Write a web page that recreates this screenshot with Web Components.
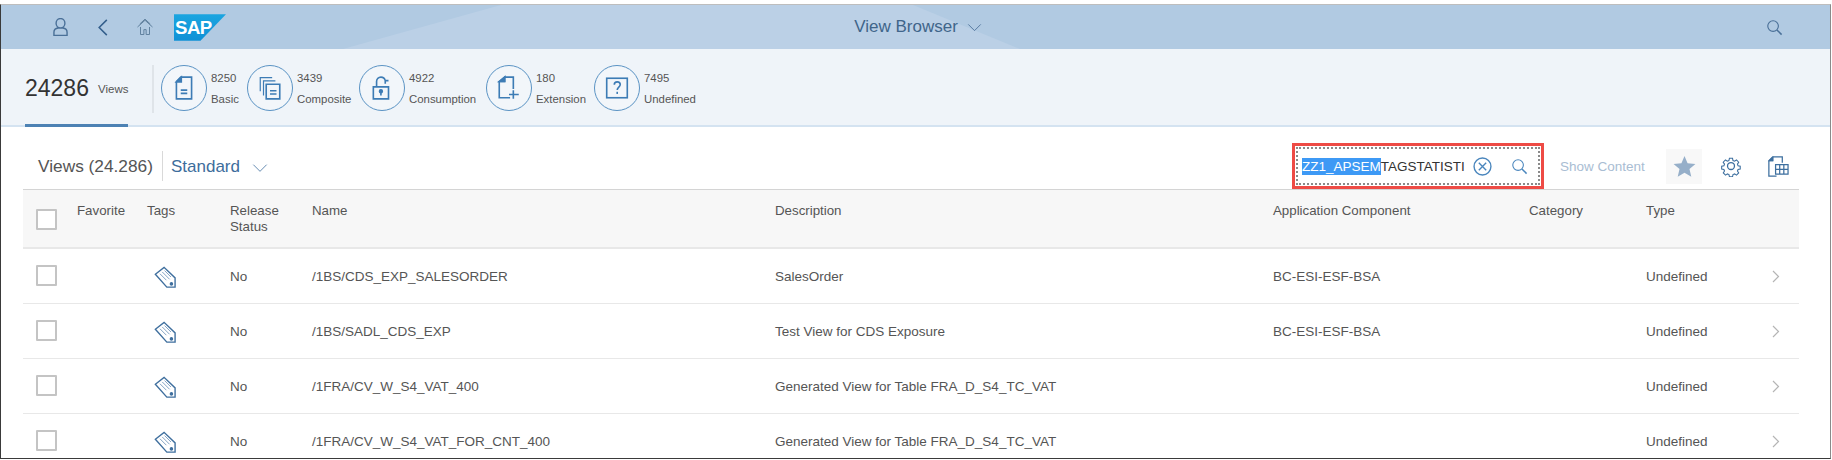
<!DOCTYPE html>
<html><head><meta charset="utf-8"><style>
html,body{margin:0;padding:0;background:#fff;height:460px;overflow:hidden}
body{font-family:"Liberation Sans",Arial,sans-serif;color:#333}
</style></head><body>
<vb-app>
  <vb-shell></vb-shell>
  <vb-kpis></vb-kpis>
  <vb-toolbar></vb-toolbar>
  <vb-table></vb-table>
</vb-app>
<script>
const S={
 user:'<path d="M12 3.500c2.800 0 4.700 2.300 4.700 5s-1.900 5-4.700 5-4.700-2.300-4.700-5 1.900-5 4.700-5zM5 21.500v-3.500c0-2.500 2-4.200 4.500-4.500h5c2.500.3 4.500 2 4.500 4.500v3.500z"/>',
 back:'<path d="M15 3 6 12l9 9"/>',
 home:'<path d="M2 12 12 3l10 9M5 8 12 1.500 19 8M6 12v10h4.500v-6.500h3V22H18V12"/>',
 search:'<circle cx="10" cy="10" r="7.500"/><path d="M15.500 15.500l6.500 6.500" stroke-width="2.200"/>',
 chev:'<path d="M2 7l10 10L22 7"/>',
};
const COLS='54px 70px 83px 82px 463px 498px 256px 117px 1fr 27px';
function svg(p,w,h,c,sw,vb){return `<svg xmlns="http://www.w3.org/2000/svg" width="${w}" height="${h}" viewBox="${vb||'0 0 24 24'}" fill="none" stroke="${c}" stroke-width="${sw}" aria-hidden="true">${p}</svg>`}
function def(n,html){customElements.define(n,class extends HTMLElement{constructor(){super();this.attachShadow({mode:'open'}).innerHTML=typeof html==='function'?html(this):html}})}

def('vb-app',`<style>:host{display:block;box-sizing:border-box;margin-top:4px;height:455px;width:1831px;border-top:1px solid #bdbdbd;border-left:1px solid #3a3a3a;border-right:1px solid #8a8a8a;border-bottom:1px solid #3a3a3a;overflow:hidden;background:#fff}</style><slot></slot>`);

def('vb-shell',`<style>
:host{display:flex;align-items:center;height:44px;background:#b1cae2;position:relative;color:#45688c}
.wedge{position:absolute;inset:0;background:#bbd0e6;clip-path:polygon(342px 44px,500px 0,912px 0,1019px 44px)}
.l,.m,.r{position:relative}
.l{display:flex;align-items:center;padding-left:52px;width:0;flex:1}
.m{display:flex;align-items:center;gap:9px;font-size:17px;color:#40658a;white-space:nowrap}
.r{flex:1;display:flex;justify-content:flex-end;padding-right:47px}
.l svg{flex:none}
.logo{margin-left:20px;flex:none}
</style>
<div class="wedge"></div>
<div class="l">
${svg(S.user,15,18,'#4a7098',1.5,'4 3 16 19')}
<span style="width:30px;flex:none"></span>${svg(S.back,10,17,'#345f8c',1.8,'5 2 11 20')}
<span style="width:28px;flex:none"></span>${svg(S.home,18,18,'#5f7f9d',1.3)}
<svg class="logo" width="52" height="27" viewBox="0 0 53 27" xmlns="http://www.w3.org/2000/svg"><defs><linearGradient id="g" x1="0" x2="0" y1="0" y2="1"><stop offset="0" stop-color="#1ba5e0"/><stop offset="1" stop-color="#0f91d6"/></linearGradient></defs><path d="M0 0H53L27 27H0z" fill="url(#g)"/><text x="1" y="20" font-family="Liberation Sans" font-weight="700" font-size="19" letter-spacing="-.5" fill="#fff">SAP</text></svg>
</div>
<div class="m"><span>View Browser</span>${svg(S.chev,15,15,'#4a7098',1.4)}</div>
<div class="r">${svg(S.search,17,17,'#4a7098',1.6)}</div>`);

const ICONS={
 basic:'<path d="M9 2h10v20H5V6z"/><path d="M5 6.500h4.500V2z" fill="#3d7cb5"/><path d="M9 14h6M9 17h6"/>',
 comp:'<path d="M3 15V2.500h11M6 19V5.500h11" stroke-width="1.100"/><path d="M8.500 8.500H21V22H8.500zM12 14.500h6M12 17.500h6"/>',
 cons:'<path d="M4 11h14v11H4zM7 11V6c0-2.200 1.800-4 4-4 2 0 3.500 1.300 4 3.200h3M15 5v3"/><circle cx="11" cy="15" r="1.300" fill="#3d7cb5"/><path d="M11 16v3"/>',
 ext:'<path d="M8 2h8v11M3 6v15h10M3 6l5-4v4z"/><path d="M3.500 6h4.500v-4z" fill="#3d7cb5"/><path d="M16 14v8M12 18h9"/>',
 undef:'<rect x="2.500" y="3" width="19" height="18"/><path d="M9.500 9c0-1.700 1.200-2.700 2.700-2.700S15 7.400 15 8.800c0 2.400-2.800 2.300-2.800 5"/><path d="M12.200 15.500v2"/>'
};
def('vb-kpi',h=>`<style>
:host{display:inline-flex;flex:none}
.c{box-sizing:border-box;width:46px;height:46px;border:1.300px solid #5a93c4;border-radius:50%;display:flex;align-items:center;justify-content:center;background:#f2f6fa;flex:none}
.t{margin-left:4px;font-size:11.400px;color:#555;display:flex;flex-direction:column;padding-top:3px;line-height:21px;white-space:nowrap}
</style><div class="c">${svg(ICONS[h.getAttribute('icon')],26,26,'#3d7cb5',1.500)}</div>
<div class="t"><span>${h.getAttribute('n')}</span><span>${h.getAttribute('l')}</span></div>`);

def('vb-kpis',`<style>
:host{display:flex;box-sizing:border-box;height:78px;background:#eff4f9;border-bottom:2px solid #d4e3f1;padding-left:24px;position:relative}
.tot{width:103px;height:78px;box-sizing:border-box;border-bottom:3px solid #4d82b4;display:flex;align-items:center;flex:none;padding-top:3px}
.big{font-size:23px;color:#333}.v{font-size:11.500px;color:#555;margin-left:9px;padding-top:1px}
.sep{width:2px;height:48px;background:#dfe4e9;margin:16px 7px 0 24px;flex:none}
.list{display:flex;padding-top:16px;height:46px}
</style>
<div class="tot"><span class="big">24286</span><span class="v">Views</span></div>
<div class="sep"></div>
<div class="list">
<vb-kpi icon="basic" n="8250" l="Basic" style="width:86px"></vb-kpi>
<vb-kpi icon="comp" n="3439" l="Composite" style="width:112px"></vb-kpi>
<vb-kpi icon="cons" n="4922" l="Consumption" style="width:127px"></vb-kpi>
<vb-kpi icon="ext" n="180" l="Extension" style="width:108px"></vb-kpi>
<vb-kpi icon="undef" n="7495" l="Undefined" style="width:120px"></vb-kpi>
</div>`);

def('vb-toolbar',`<style>
:host{display:flex;align-items:center;height:62px;box-sizing:border-box;padding:16px 0 0 37px}
.t{font-size:17.300px;color:#555}
.sep{width:1px;height:30px;background:#d9d9d9;margin:0 8px 0 9px}
.s{font-size:17px;color:#3d6d9c;padding-top:1px}
.ch{margin-left:10px;padding-top:3px;display:flex}
.sp{flex:1}
.box{box-sizing:border-box;width:252px;height:46px;border:3px solid #ee4b45;padding:1px;display:flex;flex:none;margin-right:16px}
.in{flex:1;border:2px dotted #8a8a8a;display:flex;align-items:center;padding:0 10px 0 4px;font-size:13.500px;color:#333;white-space:nowrap}
.sel{background:#3d99f5;color:#fff;padding:1px 0}
.rest{flex:1}
.clr{margin-right:19px;display:flex}.mag{display:flex}
.sc{font-size:13.500px;color:#a9bdd3;width:106px;flex:none}
.star{width:36px;height:35px;background:#f8f8f8;display:flex;align-items:center;justify-content:center;flex:none}
.ic{display:flex;flex:none}
</style>
<span class="t">Views (24.286)</span><span class="sep"></span><span class="s">Standard</span>
<span class="ch">${svg(S.chev,20,16,'#3f6f9e',1.2)}</span>
<span class="sp"></span>
<div class="box"><div class="in"><span class="sel">ZZ1_APSEM</span><span class="rest">TAGSTATISTI</span>
<span class="clr"><svg width="19" height="19" viewBox="0 0 18 18" fill="none" stroke="#4a86bd" stroke-width="1.300"><circle cx="9" cy="9" r="8"/><path d="M5.500 5.500l7 7M12.500 5.500l-7 7"/></svg></span>
<span class="mag">${svg(S.search,17,17,'#4a86bd',1.500)}</span></div></div>
<span class="sc">Show Content</span>
<span class="star"><svg width="23" height="23" viewBox="0 0 24 24"><path d="M12 1l3.200 7.600 8.200.7-6.200 5.400 1.900 8L12 18.500l-7.100 4.200 1.900-8L.6 9.300l8.200-.7z" fill="#96afc9"/></svg></span>
<span style="width:18px;flex:none"></span>
<span class="ic"><svg width="22" height="22" viewBox="0 0 24 24" fill="none" stroke="#3d6f9f" stroke-width="1.400"><circle cx="12" cy="12" r="3.800"/><path d="M10 2h4l.6 2.900 2 .9 2.600-1.600 2.800 2.900-1.600 2.500.8 2.100 2.800.6v3.600l-2.800.7-.8 2 1.600 2.500-2.800 2.800-2.500-1.600-2.100.8-.6 2.900h-4l-.6-2.900-2-.8-2.500 1.600-2.900-2.800 1.600-2.500-.8-2-2.900-.7v-3.600l2.900-.6.800-2.100L1.900 7.100l2.900-2.900 2.500 1.600 2-.9z" transform="translate(1.900 1.900) scale(.84)"/></svg></span>
<span style="width:24px;flex:none"></span>
<span class="ic" style="margin-right:41px"><svg width="23" height="23" viewBox="0 0 24 24" fill="none" stroke="#3d6f9f" stroke-width="1.300"><path d="M11 22H3V6l4-4h10v6M3 6h4V2"/><path d="M3.500 6h3.500v-3.500z" fill="#3d6f9f"/><path d="M10 10h13v10H10zM10 15h13M14.300 10v10M18.600 10v10"/></svg></span>`);

const CB=`width:17px;height:17px;border:2px solid #c4c4c4;border-radius:1px;margin-left:13px;background:#fff;`;
def('vb-row',h=>{const a=k=>h.getAttribute(k)||'';return `<style>
:host{display:grid;grid-template-columns:${COLS};height:55px;align-items:center;border-bottom:1px solid #e8e8e8;font-size:13.500px;color:#555;box-sizing:border-box;padding-top:1px}
.cb{${CB}position:relative;top:-1px}
.tag{display:flex;padding-left:7px}
</style><div class="cb"></div><div></div>
<div class="tag"><svg width="22" height="22" viewBox="0 0 24 24" fill="none" stroke="#3f6f9e" stroke-width="1.500"><path d="M1.500 9 11 1.500 23 13v10H14z"/><path d="M9 6.500l8 8M6.500 8.500l7 7M11.500 5l7 7" stroke-width="1" stroke="#7a9bbd"/><circle cx="19" cy="19.500" r="1.200" fill="#3f6f9e"/></svg></div>
<div>No</div><div>${a('name')}</div><div>${a('desc')}</div><div>${a('comp')}</div><div></div><div>Undefined</div>
<div style="display:flex"><svg width="8" height="13" viewBox="0 0 8 13" fill="none" stroke="#b5b5b5" stroke-width="1.200"><path d="M1 1l5.500 5.500L1 12"/></svg></div>`});

def('vb-table',`<style>
:host{display:block;margin-left:22px;width:1776px}
.h{display:grid;grid-template-columns:${COLS};height:60px;box-sizing:border-box;background:#f7f7f7;border-top:1px solid #d4d4d4;border-bottom:2px solid #e8e8e8;font-size:13.300px;color:#555;padding-top:13px;line-height:16px}
.cb{${CB}margin-top:6px}
</style>
<div class="h"><div class="cb"></div><div>Favorite</div><div>Tags</div><div>Release<br>Status</div><div>Name</div><div>Description</div><div>Application Component</div><div>Category</div><div>Type</div><div></div></div>
<vb-row name="/1BS/CDS_EXP_SALESORDER" desc="SalesOrder" comp="BC-ESI-ESF-BSA"></vb-row>
<vb-row name="/1BS/SADL_CDS_EXP" desc="Test View for CDS Exposure" comp="BC-ESI-ESF-BSA"></vb-row>
<vb-row name="/1FRA/CV_W_S4_VAT_400" desc="Generated View for Table FRA_D_S4_TC_VAT"></vb-row>
<vb-row name="/1FRA/CV_W_S4_VAT_FOR_CNT_400" desc="Generated View for Table FRA_D_S4_TC_VAT"></vb-row>`);
</script>
</body></html>
